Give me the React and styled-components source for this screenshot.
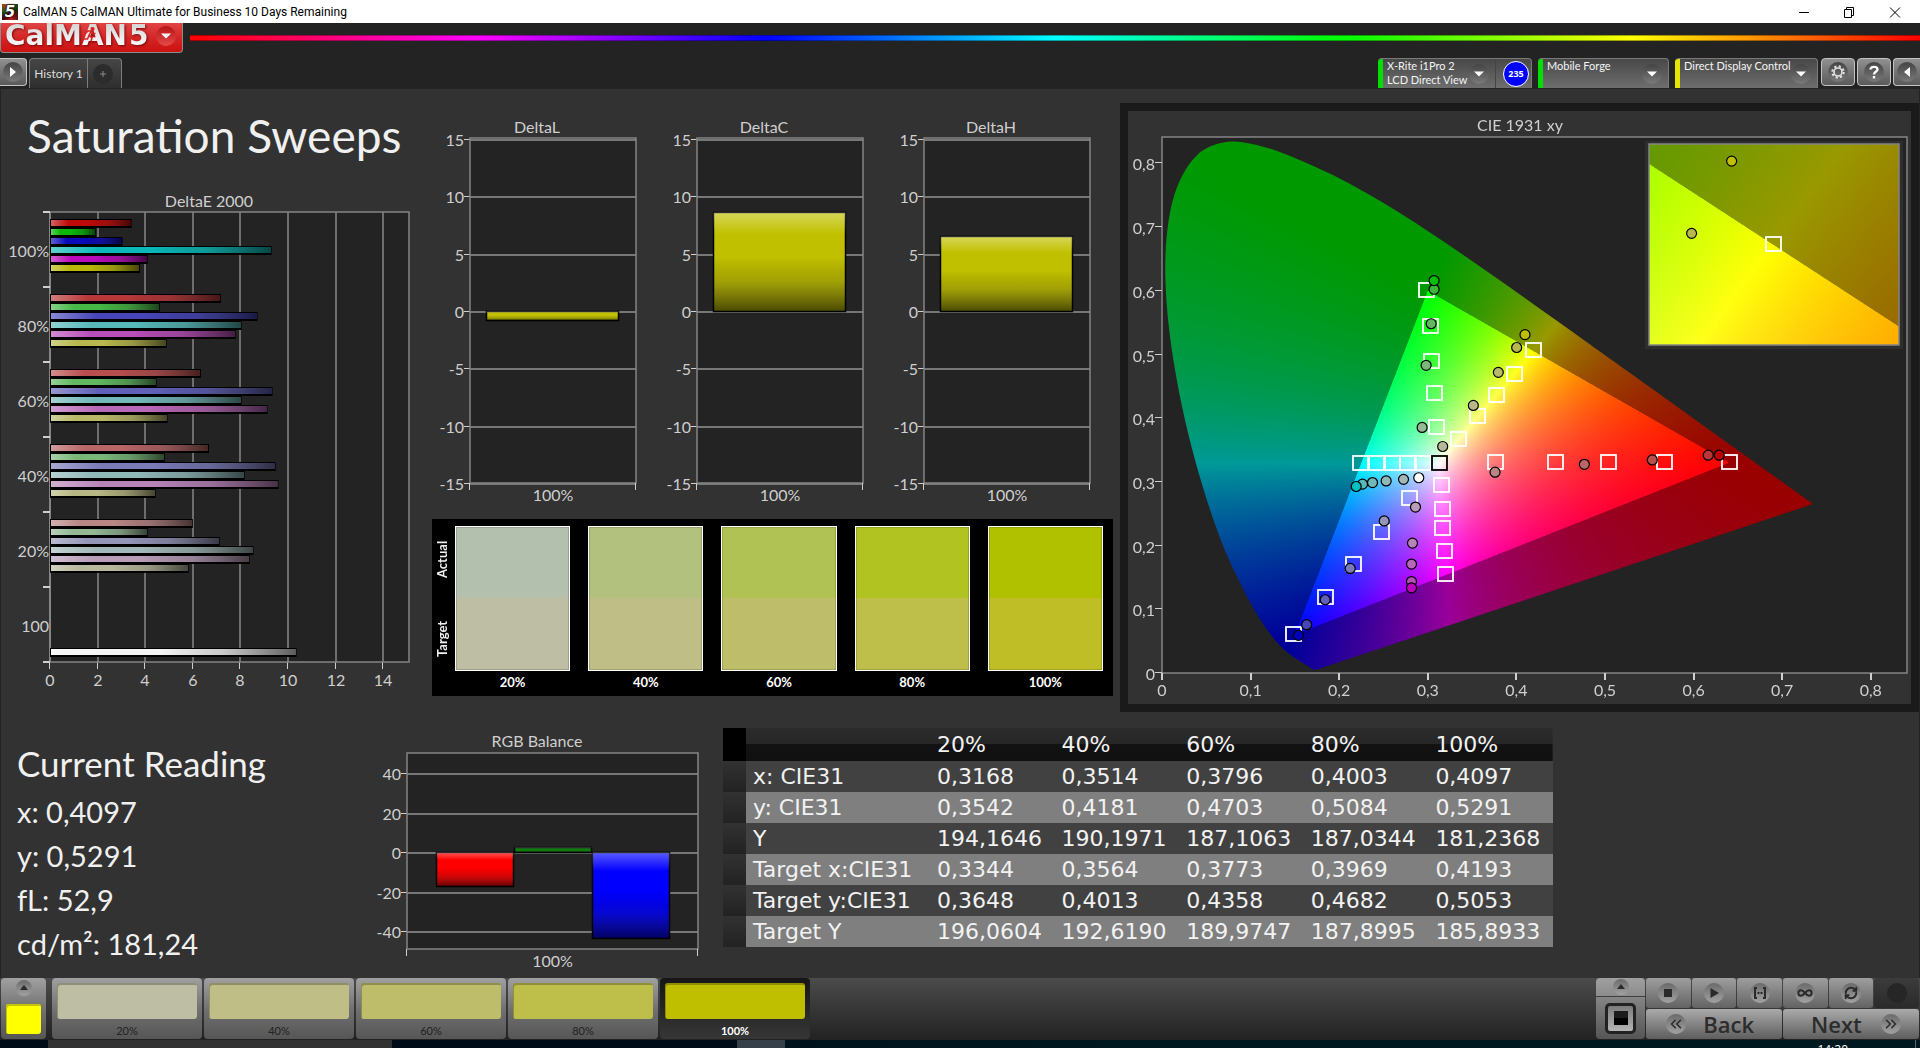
import React, { useEffect, useRef } from "react";
import styled, { createGlobalStyle } from "styled-components";
import { ChevronsLeft, ChevronsRight, Infinity as InfinityIcon, RefreshCw } from "lucide-react";

const UI = `Lato, "Open Sans", sans-serif`;
const SYSTEM = `"Open Sans", "Noto Sans", sans-serif`;
const WIDE = `"DejaVu Sans", "Noto Sans", sans-serif`;

const GlobalStyle = createGlobalStyle`
  * { box-sizing: border-box; }
  body { margin: 0; background: #232323; font-family: ${UI}; color: #f0f0f0; }
  button { font: inherit; color: inherit; border: 0; padding: 0; margin: 0; cursor: pointer; }
  h1, h2, p { margin: 0; font-weight: 400; }
`;

/* ---------- data ---------- */

const deltaE = [
  { label: "100%", bars: [[3.43, "#bf0a0a"], [1.93, "#0ab70a"], [3.05, "#0a0aba"], [9.31, "#0ab8b8"], [4.1, "#ba0aba"], [3.78, "#b9b80a"]] },
  { label: "80%", bars: [[7.18, "#b83838"], [4.62, "#46b846"], [8.72, "#4646b8"], [8.05, "#56b8b8"], [7.8, "#b84eb8"], [4.9, "#b8b84e"]] },
  { label: "60%", bars: [[6.34, "#b84f4f"], [4.48, "#60b860"], [9.35, "#6060b8"], [8.05, "#72b8b8"], [9.14, "#b868b8"], [4.94, "#b8b868"]] },
  { label: "40%", bars: [[6.68, "#b86666"], [4.82, "#7ab87a"], [9.48, "#7a7ab8"], [8.18, "#8fb8b8"], [9.6, "#b884b8"], [4.44, "#b8b884"]] },
  { label: "20%", bars: [[6, "#b98585"], [4.1, "#95b895"], [7.13, "#9595b8"], [8.55, "#a2b8b8"], [8.39, "#b89cb8"], [5.83, "#b8b89c"]] },
  { label: "100", bars: [null, null, null, null, null, null, [10.36, "#f4f4f4"]] },
];

const deltas = [
  { title: "DeltaL", value: -0.8 },
  { title: "DeltaC", value: 8.6 },
  { title: "DeltaH", value: 6.5 },
];

const swatches = [
  { label: "20%", actual: "#b3c0ae", target: "#bebea4" },
  { label: "40%", actual: "#b2c17e", target: "#bfbe86" },
  { label: "60%", actual: "#b1c254", target: "#bebe6a" },
  { label: "80%", actual: "#b1c321", target: "#bebf4b" },
  { label: "100%", actual: "#b0c100", target: "#c0be26" },
];

const patches = [
  { label: "20%", color: "#bebea4" },
  { label: "40%", color: "#bfbe86" },
  { label: "60%", color: "#bebe6a" },
  { label: "80%", color: "#bebf4b" },
  { label: "100%", color: "#bfbf00", active: true },
];

const levels = ["20%", "40%", "60%", "80%", "100%"];
const readings = [
  ["x: CIE31", "0,3168", "0,3514", "0,3796", "0,4003", "0,4097"],
  ["y: CIE31", "0,3542", "0,4181", "0,4703", "0,5084", "0,5291"],
  ["Y", "194,1646", "190,1971", "187,1063", "187,0344", "181,2368"],
  ["Target x:CIE31", "0,3344", "0,3564", "0,3773", "0,3969", "0,4193"],
  ["Target y:CIE31", "0,3648", "0,4013", "0,4358", "0,4682", "0,5053"],
  ["Target Y", "196,0604", "192,6190", "189,9747", "187,8995", "185,8933"],
];

const rgbBalance = [[-17.2, "#ff0000"], [2.6, "#118011"], [-43.5, "#0000ff"]];

const cieTargets = [
  [0.298, 0.602], [0.302, 0.545], [0.304, 0.49], [0.307, 0.439], [0.309, 0.386],
  [0.4193, 0.507], [0.3969, 0.469], [0.3765, 0.437], [0.355, 0.404], [0.334, 0.367],
  [0.2237, 0.33], [0.2417, 0.33], [0.2594, 0.33], [0.2767, 0.33], [0.2944, 0.33],
  [0.3759, 0.332], [0.4436, 0.332], [0.5034, 0.332], [0.5665, 0.332], [0.6395, 0.332],
  [0.3147, 0.295], [0.3162, 0.257], [0.3162, 0.227], [0.318, 0.192], [0.3195, 0.155],
  [0.279, 0.275], [0.2474, 0.222], [0.2158, 0.171], [0.1838, 0.12], [0.1481, 0.0615],
];

const cieActual = [
  [0.2936, 0.3855, "#95b895"], [0.2981, 0.483, "#7ab87a"], [0.3038, 0.5483, "#60b860"], [0.3071, 0.6024, "#3cb83c"], [0.3071, 0.6161, "#00bf00"],
  [0.3168, 0.3556, "#b8b89c"], [0.3514, 0.42, "#b8b884"], [0.3796, 0.472, "#b8b868"], [0.4003, 0.511, "#b8b84e"], [0.4097, 0.5312, "#bfbf00"],
  [0.2726, 0.304, "#a2b8b8"], [0.253, 0.3015, "#8fb8b8"], [0.2376, 0.299, "#72b8b8"], [0.2263, 0.2965, "#56b8b8"], [0.2192, 0.2928, "#00bfbf"],
  [0.3759, 0.3152, "#b98585"], [0.4767, 0.3276, "#b86666"], [0.5534, 0.3345, "#b84f4f"], [0.6165, 0.3419, "#b83838"], [0.6289, 0.3419, "#bf0000"],
  [0.2861, 0.2605, "#b89cb8"], [0.2827, 0.2039, "#b884b8"], [0.2816, 0.171, "#b868b8"], [0.2816, 0.1436, "#b84eb8"], [0.2816, 0.1337, "#bf00bf"],
  [0.2508, 0.2387, "#9595b8"], [0.2124, 0.1641, "#7a7ab8"], [0.1842, 0.115, "#6060b8"], [0.1632, 0.0758, "#4646b8"], [0.1541, 0.0591, "#0000bf"],
  [0.2898, 0.3065, "#ffffff"],
];

const locus = [
  [0.1741, 0.005], [0.1714, 0.0051], [0.1689, 0.0069], [0.1644, 0.0109], [0.1566, 0.0177], [0.151, 0.0227],
  [0.144, 0.0297], [0.1355, 0.0399], [0.1241, 0.0578], [0.1096, 0.0868], [0.0913, 0.1327], [0.0687, 0.2007],
  [0.0454, 0.295], [0.0235, 0.4127], [0.0082, 0.5384], [0.0039, 0.6548], [0.0139, 0.7502], [0.0389, 0.812],
  [0.0743, 0.8338], [0.1142, 0.8262], [0.1547, 0.8059], [0.1929, 0.7816], [0.2296, 0.7543], [0.2658, 0.7243],
  [0.3016, 0.6923], [0.3373, 0.6589], [0.3731, 0.6245], [0.4087, 0.5896], [0.4441, 0.5547], [0.4788, 0.5202],
  [0.5125, 0.4866], [0.5752, 0.4242], [0.627, 0.3725], [0.6658, 0.334], [0.6915, 0.3083], [0.719, 0.2809], [0.7347, 0.2653],
];

/* ---------- window frame ---------- */

const Window = styled.div`
  min-height: 100vh;
  display: flex;
  flex-direction: column;
  overflow: hidden;
`;

const TitleBar = styled.header`
  height: 23px;
  flex: none;
  display: flex;
  align-items: center;
  gap: 5px;
  padding: 0 18px 0 2px;
  background: #fff;
  color: #000;
  font: 12px/22px Roboto, ${SYSTEM};
`;

const AppIcon = styled.span`
  width: 16px;
  height: 16px;
  background: conic-gradient(from 20deg, #2a5a20, #103010, #601010, #c02020, #400808, #206020, #b04010, #2a5a20);
  color: #fff;
  font: italic 700 15px/16px "DejaVu Sans", sans-serif;
  text-align: center;
  text-shadow: 0 0 2px #000, 0 0 2px #000;
`;

const WindowControls = styled.div`
  margin-left: auto;
  display: flex;
  gap: 32px;
`;

const WindowButton = styled.button`
  width: 14px;
  height: 14px;
  background: none;
  svg { display: block; }
`;

const BrandRow = styled.div`
  height: 35px;
  flex: none;
  display: flex;
  gap: 7px;
`;

const Brand = styled.button`
  width: 183px;
  height: 30px;
  flex: none;
  display: flex;
  align-items: center;
  gap: 2px;
  padding: 0 6px 3px 4px;
  border: 1px solid #8d8d8d;
  border-top: 0;
  border-radius: 0 0 4px 4px;
  background: linear-gradient(#e04444, #d42626 50%, #cc1010);
`;

const BrandText = styled.span`
  position: relative;
  font: 700 28px/26px "DejaVu Sans", sans-serif;
  background: linear-gradient(#d4d4d4, #fff);
  background-clip: text;
  color: transparent;
  filter: drop-shadow(1px 1px 1px #7a0808);
`;

const BrandArrow = styled.span`
  margin-left: auto;
  width: 20px;
  height: 20px;
  display: grid;
  place-items: center;
  border-radius: 50%;
  background: linear-gradient(#b81414, #e44a4a);
`;

const Runner = styled.svg`
  position: absolute;
  left: 78px;
  top: 4px;
`;

const Spectrum = styled.div`
  flex: 1;
  height: 6px;
  margin-top: 12px;
  border: solid rgba(0, 0, 0, 0.35);
  border-width: 1px 0;
  background: linear-gradient(90deg, #f00, #f0f, #00f, #0ff, #0f0, #ff0, #f00) border-box;
`;

const ToolRow = styled.div`
  height: 30px;
  flex: none;
  display: flex;
  align-items: flex-start;
`;

const Disc = styled.span`
  width: ${(p) => p.$size || 20}px;
  height: ${(p) => p.$size || 20}px;
  flex: none;
  display: grid;
  place-items: center;
  border-radius: 50%;
  background: ${(p) => p.$bg || "linear-gradient(#444, #7a7a7a)"};
  svg { display: block; }
`;

const ToolButton = styled.button`
  width: ${(p) => p.$width || 34}px;
  height: 28px;
  display: grid;
  place-items: center;
  border: 1px solid #c4c4c4;
  border-left-width: ${(p) => (p.$flush === "left" ? 0 : 1)}px;
  border-right-width: ${(p) => (p.$flush === "right" ? 0 : 1)}px;
  border-radius: ${(p) => (p.$flush === "left" ? "0 4px 4px 0" : p.$flush === "right" ? "4px 0 0 4px" : "4px")};
  background: linear-gradient(#909090, #5a5a5a);
`;

const Tabs = styled.nav`
  height: 30px;
  margin-left: 2px;
  display: flex;
  border: 1px solid #7c7c7c;
  border-bottom: 0;
  border-radius: 4px 4px 0 0;
  background: linear-gradient(#464646, #2e2e2e);
`;

const Tab = styled.button`
  width: 58px;
  background: none;
  color: #dcdcdc;
  font-size: 12px;
  line-height: 28px;
  text-align: center;
  border-right: 1px solid #7c7c7c;
`;

const AddTab = styled.button`
  width: 33px;
  padding-left: 5px;
  background: none;
`;

const Devices = styled.div`
  margin-left: auto;
  display: flex;
  gap: 6px;
`;

const Device = styled.div`
  width: ${(p) => p.$width}px;
  height: 30px;
  display: flex;
  border: 1px solid #7a7a7a;
  border-width: 1px 1px 0 0;
  border-radius: 4px 4px 0 0;
  overflow: hidden;
  background: linear-gradient(#484848, #6e6e6e);
  &::before { content: ""; width: 5px; flex: none; background: ${(p) => p.$accent}; }
`;

const DeviceSelect = styled.button`
  flex: 1;
  min-width: 0;
  display: flex;
  justify-content: space-between;
  padding: 0 6px 0 4px;
  background: none;
  color: #f4f4f4;
  text-align: left;
  font-size: 11px;
  line-height: 14px;
  white-space: nowrap;
  ${Disc} { margin-top: 5px; }
`;

const LevelBadge = styled.button`
  width: 36px;
  flex: none;
  display: grid;
  align-items: center;
  justify-items: end;
  padding-right: 2px;
  border-left: 1px solid #444;
  background: none;
  span {
    width: 26px;
    height: 26px;
    border: 1px solid #fff;
    border-radius: 50%;
    background: #00f;
    color: #fff;
    font: 700 9px/24px "Open Sans", sans-serif;
    text-align: center;
  }
`;

const ToolButtons = styled.div`
  display: flex;
  gap: 2px;
  margin-left: 3px;
`;

/* ---------- workspace ---------- */

const Workspace = styled.main`
  flex: 1;
  margin: 1px 1px 0;
  background: #323232;
`;

const Upper = styled.div`
  display: grid;
  grid-template-columns: minmax(0, 430fr) minmax(0, 689fr) minmax(0, 799fr);
  align-items: start;
  padding-bottom: 16px;
`;

const Heading = styled.h1`
  padding: 17px 0 24px 26px;
  font-size: 46px;
  line-height: 60px;
  white-space: nowrap;
`;

const MiddleColumn = styled.section`
  padding-top: 23px;
`;

const DeltaRow = styled.div`
  display: grid;
  grid-template-columns: repeat(3, minmax(0, 1fr));
  padding-right: 8px;
`;

const Chart = styled.svg`
  display: block;
  width: 100%;
  height: auto;
  font: 16px ${UI};
`;

const SwatchPanel = styled.div`
  display: flex;
  margin: 7px 7px 0 1px;
  padding-right: 10px;
  height: 177px;
  background: #000;
`;

const SideLabels = styled.div`
  width: 23px;
  height: 160px;
  display: flex;
  flex-direction: column;
  span {
    flex: 1;
    writing-mode: vertical-rl;
    transform: rotate(180deg);
    text-align: center;
    font-size: 13px;
    font-weight: 700;
    line-height: 20px;
    align-self: flex-start;
  }
`;

const SwatchGrid = styled.div`
  flex: 1;
  padding-top: 7px;
  display: grid;
  grid-template-columns: repeat(5, minmax(0, 1fr));
  gap: 18px;
`;

const Swatch = styled.div`
  text-align: center;
  font-size: 13px;
  font-weight: 700;
  line-height: 22px;
  color: #fff;
`;

const SwatchColor = styled.div`
  height: 145px;
  border: 1px solid #fff;
  background: linear-gradient(${(p) => p.$actual} 50%, ${(p) => p.$target} 50%);
  box-shadow: inset 0 0 0 1px rgba(0, 0, 0, 0.15);
`;

const CiePanel = styled.section`
  margin-top: 14px;
  border: 8px solid #1a1a1a;
  position: relative;
`;

const CieCanvas = styled.canvas`
  display: block;
  width: 100%;
  height: auto;
`;

const CieOverlay = styled(Chart)`
  position: absolute;
  inset: 0;
`;

const Lower = styled.div`
  display: grid;
  grid-template-columns: minmax(0, 372fr) minmax(0, 350fr) minmax(0, 830fr) minmax(0, 366fr);
  align-items: start;
`;

const Reading = styled.section`
  padding: 11px 0 0 16px;
  white-space: nowrap;
  h2 { font-size: 35px; line-height: 48px; margin-bottom: 3px; }
  p { font-size: 29px; line-height: 44px; }
`;

const ReadingTable = styled.table`
  width: 100%;
  table-layout: fixed;
  border-collapse: collapse;
  font: 22px/30px ${WIDE};
  color: #f2f2f2;
  th, td { height: 31px; padding: 0 0 0 7px; text-align: left; font-weight: 400; white-space: nowrap; }
  thead th { height: 33px; }
`;

const HeadRow = styled.tr`
  background: linear-gradient(#2c2c2c, #262626 48%, #121212 50%, #101010);
  td:first-child { background: #000; }
`;

const BodyRow = styled.tr`
  background: ${(p) => (p.$alt ? "#7f7f7f" : "#414141")};
  td:first-child { background: linear-gradient(#323232, #222); }
`;

const GutterCol = styled.col`width: 23px;`;
const NameCol = styled.col`width: 184px;`;

/* ---------- bottom bar ---------- */

const BottomBar = styled.footer`
  height: 62px;
  flex: none;
  display: flex;
  padding: 0 1px;
  background: linear-gradient(#4b4b4b, #222);
`;

const metal = "linear-gradient(#a0a0a0, #6e6e6e 55%, #565656)";

const PickerButton = styled.button`
  width: 45px;
  height: 61px;
  display: flex;
  flex-direction: column;
  align-items: center;
  padding-top: 2px;
  gap: 8px;
  border-radius: 4px;
  background: ${metal};
`;

const PickerColor = styled.span`
  width: 35px;
  height: 30px;
  border-radius: 3px;
  background: #ff0;
  box-shadow: inset 1px 2px 0 #c4c400;
`;

const PatchList = styled.div`
  display: flex;
  gap: 2px;
  margin-left: 6px;
`;

const Patch = styled.button`
  width: 150px;
  height: 61px;
  display: flex;
  flex-direction: column;
  padding: 5px 5px 0;
  border-radius: 4px;
  background: ${(p) => (p.$active ? "linear-gradient(#161616, #363636)" : metal)};
  color: ${(p) => (p.$active ? "#fff" : "#222")};
  font-size: 11px;
  font-weight: ${(p) => (p.$active ? 700 : 400)};
  line-height: 24px;
  text-align: center;
`;

const PatchColor = styled.span`
  width: 100%;
  height: 36px;
  flex: none;
  border-radius: 3px;
  background: ${(p) => p.$color};
  box-shadow: inset 1px 2px 0 rgba(0, 0, 0, 0.25);
`;

const PatchLabel = styled.span`width: 100%;`;

const Transport = styled.div`
  margin-left: auto;
  display: flex;
  gap: 1px;
`;

const PatternPicker = styled.div`
  width: 49px;
  height: 61px;
  display: grid;
  grid-template-rows: 18px 1fr;
  gap: 1px;
  border-radius: 4px;
  overflow: hidden;
`;

const PatternButton = styled.button`
  display: grid;
  place-items: center;
  background: ${(p) => (p.$top ? "linear-gradient(#a0a0a0, #8c8c8c)" : "linear-gradient(#858585, #555)")};
`;

const PatternFrame = styled.span`
  width: 31px;
  height: 31px;
  display: grid;
  place-items: center;
  border: 3px solid #222;
  border-radius: 5px;
  background: linear-gradient(#7c7c7c, #b4b4b4);
  &::after { content: ""; width: 14px; height: 14px; background: linear-gradient(#1c1c1c 50%, #000 50%); }
`;

const TransportGrid = styled.div`
  width: 273px;
  display: grid;
  grid-template-columns: repeat(6, minmax(0, 1fr));
  grid-template-rows: 30px 30px;
  gap: 1px;
`;

const TransportButton = styled.button`
  display: grid;
  place-items: center;
  border-radius: 3px;
  background: ${(p) => (p.$off ? "linear-gradient(#3c3c3c, #2a2a2a)" : "linear-gradient(#9e9e9e, #636363)")};
`;

const StepButton = styled.button`
  grid-column: span 3;
  display: flex;
  align-items: center;
  justify-content: space-between;
  padding: 0 ${(p) => (p.$next ? 18 : 28)}px 0 ${(p) => (p.$next ? 28 : 20)}px;
  border-radius: 3px;
  background: linear-gradient(#aaa, #5e5e5e);
  color: #2c2c2c;
  font: 600 22px/28px ${SYSTEM};
`;

const TaskBar = styled.div`
  height: 8px;
  flex: none;
  display: flex;
  overflow: hidden;
  background: linear-gradient(90deg, #000e18 20%, #001820 60%);
`;

const TaskSlot = styled.span`
  width: ${(p) => p.$width}px;
  background: ${(p) => p.$color};
`;

const Clock = styled.span`
  margin-left: auto;
  padding: 3px 67px 0 0;
  border-right: 1px solid #5a6a70;
  margin-right: 4px;
  color: #fff;
  font: 12px/14px ${SYSTEM};
`;

/* ---------- icons ---------- */

const DownIcon = () => (
  <svg width="10" height="6" viewBox="0 0 10 6"><path d="M0 0.500h10L5 5.500z" fill="#fff" /></svg>
);
const UpIcon = () => (
  <svg width="8" height="6" viewBox="0 0 8 6"><path d="M0 5h8L4 0z" fill="#2a2a2a" /></svg>
);
const SideIcon = ({ left }) => (
  <svg width="8" height="12" viewBox="0 0 8 12"><path d={left ? "M7 1v10L1 6z" : "M1 1v10l6-5z"} fill="#fff" /></svg>
);
const GearIcon = () => (
  <svg width="16" height="16" viewBox="0 0 16 16" fill="none" stroke="#e4e4e4">
    <circle cx="8" cy="8" r="4" strokeWidth="1.6" />
    <circle cx="8" cy="8" r="5.700" strokeWidth="2" strokeDasharray="2.200 2.276" />
  </svg>
);

/* ---------- charts ---------- */

const LABEL = "#cfcfcf";
const GRID = "#858585";
const PLOT = "#232323";

function Gloss({ id, vertical }) {
  return (
    <linearGradient id={id} x1="0" y1="0" x2={vertical ? 0 : 1} y2={vertical ? 1 : 0}>
      <stop offset="0" stopColor="#fff" stopOpacity="0.35" />
      <stop offset="0.22" stopColor="#fff" stopOpacity="0" />
      <stop offset="0.45" stopColor="#000" stopOpacity="0" />
      <stop offset="0.7" stopColor="#222" stopOpacity="0.2" />
      <stop offset="1" stopColor="#000" stopOpacity="0.62" />
    </linearGradient>
  );
}

function DeltaEChart() {
  const left = 49, right = 408, top = 22, bottom = 472, unit = 23.8, band = 75;
  return (
    <Chart viewBox="0 0 430 510" role="img" aria-label="DeltaE 2000">
      <defs><Gloss id="gloss-h" /></defs>
      <rect x={left} y={top} width={right - left} height={bottom - top} fill={PLOT} />
      {[0, 2, 4, 6, 8, 10, 12, 14].map((v) => {
        const x = Math.round(left + v * unit);
        return (
          <g key={v}>
            <rect x={x - 1} y={top} width="2" height={bottom - top} fill={v ? "#6e6e6e" : GRID} />
            <rect x={x - 1} y={bottom} width="1" height="7" fill={LABEL} />
            <text x={x} y="496" fill={LABEL} textAnchor="middle">{v}</text>
          </g>
        );
      })}
      <rect x={left} y={top} width={right - left} height={bottom - top} fill="none" stroke={GRID} strokeWidth="1.500" />
      {[0, 1, 2, 3, 4, 5, 6].map((i) => (
        <rect key={i} x="42" y={top - 1 + i * band} width="7" height="2" fill={LABEL} />
      ))}
      {deltaE.map((group, g) => (
        <g key={g}>
          <text x="48" y={top + g * band + 45} fill={LABEL} textAnchor="end">{group.label}</text>
          {group.bars.map((bar, i) => {
            if (!bar) return null;
            const y = top + g * band + 7 + i * 9;
            const width = bar[0] * unit;
            return (
              <g key={i}>
                <rect x={left} y={y} width={width} height="9" fill="#000" />
                <rect x={left + 1} y={y + 1} width={width - 2} height="6" fill={bar[1]} />
                <rect x={left + 1} y={y + 1} width={width - 2} height="6" fill="url(#gloss-h)" />
              </g>
            );
          })}
        </g>
      ))}
      <text x="208" y="17" fill={LABEL} textAnchor="middle">DeltaE 2000</text>
    </Chart>
  );
}

function ColumnChart({ title, width, height, plot, titleX, titleY, ticks, zero, unit, bars, barLeft, barWidth, labelY }) {
  const id = "gloss-" + title.replace(" ", "");
  return (
    <Chart viewBox={`0 0 ${width} ${height}`} role="img" aria-label={title}>
      <defs><Gloss id={id} vertical /></defs>
      <text x={titleX} y={titleY} fill={LABEL} textAnchor="middle">{title}</text>
      <rect x={plot.left} y={plot.top} width={plot.right - plot.left} height={plot.bottom - plot.top} fill={PLOT} />
      {ticks.map((v) => {
        const y = Math.round(zero - v * unit);
        return (
          <g key={v}>
            <rect x={plot.left} y={y - 1} width={plot.right - plot.left} height="2" fill="#777" />
            <rect x={plot.left - 6} y={y - 1} width="6" height="1" fill={LABEL} />
            <text x={plot.left - 6} y={y + 6} fill={LABEL} textAnchor="end">{v}</text>
          </g>
        );
      })}
      <rect x={plot.left} y={plot.top} width={plot.right - plot.left} height={plot.bottom - plot.top} fill="none" stroke={GRID} strokeWidth="1.500" />
      <rect x={plot.left - 1} y={plot.bottom} width="1" height="7" fill={LABEL} />
      <rect x={plot.right - 1} y={plot.bottom} width="1" height="7" fill={LABEL} />
      {bars.map(([value, color], i) => {
        const h = Math.max(1, Math.round(Math.abs(value) * unit));
        const y = value > 0 ? zero - h : zero;
        const box = { x: barLeft + i * barWidth + 0.5, y: y - 0.5, width: barWidth - 1, height: h };
        return (
          <g key={i}>
            <rect {...box} fill={color} stroke="#000" strokeWidth="1.500" />
            <rect {...box} fill={`url(#${id})`} />
          </g>
        );
      })}
      <text x={(plot.left + plot.right) / 2} y={labelY} fill={LABEL} textAnchor="middle">100%</text>
    </Chart>
  );
}

const CIE = { width: 783, height: 593, left: 34, top: 26, right: 779, bottom: 562, sx: 886, sy: 637 };
const INSET = { left: 521, top: 33, width: 250, height: 201, x: 0.3903, y: 0.534, sx: 4260, sy: 3490 };
const cieX = (x) => CIE.left + x * CIE.sx;
const cieY = (y) => CIE.bottom - y * CIE.sy;

function insideGamut(x, y) {
  const t = [[0.64, 0.33], [0.3, 0.6], [0.15, 0.06]];
  return t.every(([ax, ay], i) => {
    const [bx, by] = t[(i + 1) % 3];
    return (bx - ax) * (y - ay) - (by - ay) * (x - ax) >= 0;
  });
}

function chromaColor(x, y) {
  const X = x / y, Z = (1 - x - y) / y;
  const rgb = [
    3.2406 * X - 1.5372 - 0.4986 * Z,
    -0.9689 * X + 1.8758 + 0.0415 * Z,
    0.0557 * X - 0.204 + 1.057 * Z,
  ].map((c) => Math.max(0, c));
  const max = Math.max(...rgb);
  const level = insideGamut(x, y) ? 255 : 153;
  return rgb.map((c) => (c / max) * level);
}

function paintField(width, height, toX, toY) {
  const layer = document.createElement("canvas");
  layer.width = width;
  layer.height = height;
  const ctx = layer.getContext("2d");
  const image = ctx.createImageData(width, height);
  for (let py = 0; py < height; py++) {
    for (let px = 0; px < width; px++) {
      const sum = [0, 0, 0];
      for (const [ox, oy] of [[0.25, 0.25], [0.75, 0.25], [0.25, 0.75], [0.75, 0.75]]) {
        const c = chromaColor(toX(px + ox), Math.max(0.0005, toY(py + oy)));
        for (let k = 0; k < 3; k++) sum[k] += c[k] / 4;
      }
      image.data.set([sum[0], sum[1], sum[2], 255], (py * width + px) * 4);
    }
  }
  ctx.putImageData(image, 0, 0);
  return layer;
}

function drawCie(canvas) {
  const ctx = canvas.getContext("2d");
  ctx.clearRect(0, 0, CIE.width, CIE.height);

  const field = paintField(CIE.width, CIE.height, (px) => (px - CIE.left) / CIE.sx, (py) => (CIE.bottom - py) / CIE.sy);
  const mask = field.getContext("2d");
  const p = locus.map(([x, y]) => [cieX(x), cieY(y)]);
  mask.globalCompositeOperation = "destination-in";
  mask.beginPath();
  mask.moveTo(...p[0]);
  for (let i = 0; i < p.length - 1; i++) {
    const a = p[Math.max(0, i - 1)], b = p[i], c = p[i + 1], d = p[Math.min(p.length - 1, i + 2)];
    mask.bezierCurveTo(b[0] + (c[0] - a[0]) / 6, b[1] + (c[1] - a[1]) / 6, c[0] - (d[0] - b[0]) / 6, c[1] - (d[1] - b[1]) / 6, c[0], c[1]);
  }
  mask.closePath();
  mask.fill();

  ctx.fillStyle = PLOT;
  ctx.fillRect(CIE.left, CIE.top, CIE.right - CIE.left, CIE.bottom - CIE.top);
  ctx.drawImage(field, 0, 0);

  ctx.fillStyle = "#2e2e2e";
  ctx.fillRect(INSET.left - 4, INSET.top - 3, INSET.width + 8, INSET.height + 7);
  const inset = paintField(INSET.width, INSET.height, (px) => INSET.x + px / INSET.sx, (py) => INSET.y - py / INSET.sy);
  ctx.drawImage(inset, INSET.left, INSET.top);
}

function Marker({ x, y, color = "#fff" }) {
  return <rect x={Math.round(x) - 7} y={Math.round(y) - 7} width="15" height="14" fill="none" stroke={color} strokeWidth="1.800" />;
}

function CieChart() {
  const ref = useRef(null);
  useEffect(() => drawCie(ref.current), []);
  const ticks = [0, 1, 2, 3, 4, 5, 6, 7, 8];
  const text = (v) => (v ? `0,${v}` : "0");
  const insetX = (x) => INSET.left + (x - INSET.x) * INSET.sx;
  const insetY = (y) => INSET.top + (INSET.y - y) * INSET.sy;
  return (
    <CiePanel>
      <CieCanvas ref={ref} width={CIE.width} height={CIE.height} />
      <CieOverlay viewBox={`0 0 ${CIE.width} ${CIE.height}`} role="img" aria-label="CIE 1931 xy">
        <text x="392" y="20" fill={LABEL} textAnchor="middle">CIE 1931 xy</text>
        <rect x={CIE.left} y={CIE.top} width={CIE.right - CIE.left} height={CIE.bottom - CIE.top} fill="none" stroke={GRID} strokeWidth="1.500" />
        {ticks.map((v) => (
          <g key={v}>
            <rect x={Math.round(cieX(v / 10)) - 1} y={CIE.bottom} width="2" height="7" fill={LABEL} />
            <text x={cieX(v / 10)} y="585" fill={LABEL} textAnchor="middle">{text(v)}</text>
            <rect x={CIE.left - 7} y={Math.round(cieY(v / 10)) - 1} width="7" height="1" fill={LABEL} />
            <text x={CIE.left - 7} y={cieY(v / 10) + 7} fill={LABEL} textAnchor="end">{text(v)}</text>
          </g>
        ))}
        {cieTargets.map(([x, y], i) => <Marker key={i} x={cieX(x)} y={cieY(y)} />)}
        <Marker x={cieX(0.3127)} y={cieY(0.33)} color="#000" />
        {cieActual.map(([x, y, color], i) => (
          <circle key={i} cx={cieX(x)} cy={cieY(y)} r="5" fill={color} stroke="#000" strokeWidth="1.200" />
        ))}
        <rect x={INSET.left} y={INSET.top} width={INSET.width} height={INSET.height} fill="none" stroke={GRID} strokeWidth="1.500" />
        <Marker x={insetX(0.4193)} y={insetY(0.5053)} />
        <circle cx={insetX(0.4003)} cy={insetY(0.5084)} r="5" fill="#b8b84e" stroke="#000" strokeWidth="1.200" />
        <circle cx={insetX(0.4097)} cy={insetY(0.5291)} r="5" fill="#bfbf00" stroke="#000" strokeWidth="1.200" />
      </CieOverlay>
    </CiePanel>
  );
}

/* ---------- page ---------- */

const grey = "linear-gradient(#6a6a6a, #a2a2a2)";

export default function App() {
  return (
    <Window>
      <GlobalStyle />
      <TitleBar>
        <AppIcon aria-hidden="true">5</AppIcon>
        <span>CalMAN 5 CalMAN Ultimate for Business 10 Days Remaining</span>
        <WindowControls>
          <WindowButton aria-label="Minimize">
            <svg width="14" height="14" viewBox="0 0 14 14"><path d="M3 7.500h10" stroke="#000" /></svg>
          </WindowButton>
          <WindowButton aria-label="Restore">
            <svg width="14" height="14" viewBox="0 0 14 14" fill="none" stroke="#000"><path d="M2.500 4.500h7v8h-7zM4.500 4.500v-2h7v8h-2" /></svg>
          </WindowButton>
          <WindowButton aria-label="Close">
            <svg width="14" height="14" viewBox="0 0 14 14" stroke="#000"><path d="M2 2.500l10 10M12 2.500l-10 10" /></svg>
          </WindowButton>
        </WindowControls>
      </TitleBar>

      <BrandRow>
        <Brand>
          <BrandText>
            CalMAN
            <Runner width="14" height="16" viewBox="0 0 14 16" fill="none" stroke="#d22" strokeWidth="1.600" aria-hidden="true">
              <circle cx="9.500" cy="2" r="1.300" fill="#d22" />
              <path d="M8 4.500l-2 4 3 2-1 4M6 8.500l-1.500 3.500H1M3 6l2-2h3l2 2.500h2.500" />
            </Runner>
          </BrandText>
          <BrandText>5</BrandText>
          <BrandArrow><DownIcon /></BrandArrow>
        </Brand>
        <Spectrum />
      </BrandRow>

      <ToolRow>
        <ToolButton $flush="left" $width={27} aria-label="Expand"><Disc><SideIcon /></Disc></ToolButton>
        <Tabs>
          <Tab>History 1</Tab>
          <AddTab aria-label="Add history">
            <Disc $bg="#2c2c2c">
              <svg width="8" height="8" viewBox="0 0 8 8"><path d="M4 1v6M1 4h6" stroke="#8a8a8a" /></svg>
            </Disc>
          </AddTab>
        </Tabs>
        <Devices>
          <Device $width={154} $accent="#00e000">
            <DeviceSelect><span>X-Rite i1Pro 2<br />LCD Direct View</span><Disc><DownIcon /></Disc></DeviceSelect>
            <LevelBadge><span>235</span></LevelBadge>
          </Device>
          <Device $width={131} $accent="#00e000">
            <DeviceSelect><span>Mobile Forge</span><Disc><DownIcon /></Disc></DeviceSelect>
          </Device>
          <Device $width={143} $accent="#e6e600">
            <DeviceSelect><span>Direct Display Control</span><Disc><DownIcon /></Disc></DeviceSelect>
          </Device>
        </Devices>
        <ToolButtons>
          <ToolButton aria-label="Settings"><Disc><GearIcon /></Disc></ToolButton>
          <ToolButton aria-label="Help">
            <Disc>
              <svg width="12" height="14" viewBox="0 0 12 14" fill="none" stroke="#fff" strokeWidth="2.400"><path d="M2.500 4.500C2.500 1 9.500 1 9.500 4.500C9.500 6.500 6 6.500 6 9.500M6 11v2.500" /></svg>
            </Disc>
          </ToolButton>
          <ToolButton $flush="right" $width={27} aria-label="Collapse"><Disc><SideIcon left /></Disc></ToolButton>
        </ToolButtons>
      </ToolRow>

      <Workspace>
        <Upper>
          <section>
            <Heading>Saturation Sweeps</Heading>
            <DeltaEChart />
          </section>
          <MiddleColumn>
            <DeltaRow>
              {deltas.map((d) => (
                <ColumnChart
                  key={d.title}
                  title={d.title}
                  width={227}
                  height={400}
                  plot={{ left: 39, right: 205, top: 26, bottom: 371 }}
                  titleX={106}
                  titleY={21}
                  ticks={[15, 10, 5, 0, -5, -10, -15]}
                  zero={200}
                  unit={11.47}
                  bars={[[d.value, "#c1c000"]]}
                  barLeft={55}
                  barWidth={133}
                  labelY={389}
                />
              ))}
            </DeltaRow>
            <SwatchPanel>
              <SideLabels><span>Actual</span><span>Target</span></SideLabels>
              <SwatchGrid>
                {swatches.map((s) => (
                  <Swatch key={s.label}>
                    <SwatchColor $actual={s.actual} $target={s.target} />
                    {s.label}
                  </Swatch>
                ))}
              </SwatchGrid>
            </SwatchPanel>
          </MiddleColumn>
          <CieChart />
        </Upper>

        <Lower>
          <Reading>
            <h2>Current Reading</h2>
            <p>x: 0,4097</p>
            <p>y: 0,5291</p>
            <p>fL: 52,9</p>
            <p>cd/m²: 181,24</p>
          </Reading>
          <ColumnChart
            title="RGB Balance"
            width={350}
            height={250}
            plot={{ left: 34, right: 325, top: 25, bottom: 221 }}
            titleX={164}
            titleY={19}
            ticks={[40, 20, 0, -20, -40]}
            zero={125}
            unit={1.975}
            bars={rgbBalance}
            barLeft={63}
            barWidth={78}
            labelY={239}
          />
          <ReadingTable>
            <colgroup><GutterCol /><NameCol /><col span="5" /></colgroup>
            <thead>
              <HeadRow>
                <td />
                <td />
                {levels.map((l) => <th key={l} scope="col">{l}</th>)}
              </HeadRow>
            </thead>
            <tbody>
              {readings.map(([name, ...values], i) => (
                <BodyRow key={name} $alt={i % 2 === 1}>
                  <td />
                  <th scope="row">{name}</th>
                  {values.map((v, k) => <td key={k}>{v}</td>)}
                </BodyRow>
              ))}
            </tbody>
          </ReadingTable>
        </Lower>
      </Workspace>

      <BottomBar>
        <PickerButton aria-label="Pattern colour">
          <Disc $size={16} $bg={grey}><UpIcon /></Disc>
          <PickerColor />
        </PickerButton>
        <PatchList>
          {patches.map((p) => (
            <Patch key={p.label} $active={p.active}>
              <PatchColor $color={p.color} />
              <PatchLabel>{p.label}</PatchLabel>
            </Patch>
          ))}
        </PatchList>
        <Transport>
          <PatternPicker>
            <PatternButton $top aria-label="More patterns"><Disc $size={16} $bg={grey}><UpIcon /></Disc></PatternButton>
            <PatternButton aria-label="Window pattern"><PatternFrame /></PatternButton>
          </PatternPicker>
          <TransportGrid>
            <TransportButton aria-label="Stop">
              <Disc $bg={grey}><svg width="8" height="8"><rect width="8" height="8" fill="#2a2a2a" /></svg></Disc>
            </TransportButton>
            <TransportButton aria-label="Play">
              <Disc $bg={grey}><svg width="10" height="10" viewBox="0 0 10 10"><path d="M1.500 0v10L10 5z" fill="#2a2a2a" /></svg></Disc>
            </TransportButton>
            <TransportButton aria-label="Read series">
              <Disc $bg={grey}>
                <svg width="14" height="12" viewBox="0 0 14 12" fill="none" stroke="#2a2a2a" strokeWidth="2">
                  <path d="M4 1H2v10h2M10 1h2v10h-2" /><path d="M4.500 6h2M7.500 6h2" />
                </svg>
              </Disc>
            </TransportButton>
            <TransportButton aria-label="Read continuously">
              <Disc $bg={grey}><InfinityIcon size={16} color="#2a2a2a" strokeWidth={3} /></Disc>
            </TransportButton>
            <TransportButton aria-label="Refresh">
              <Disc $bg={grey}><RefreshCw size={14} color="#2a2a2a" strokeWidth={3.4} /></Disc>
            </TransportButton>
            <TransportButton $off aria-label="Unavailable"><Disc $bg="#262626" /></TransportButton>
            <StepButton>
              <Disc $bg={grey}><ChevronsLeft size={18} color="#2a2a2a" /></Disc>
              Back
            </StepButton>
            <StepButton $next>
              Next
              <Disc $bg={grey}><ChevronsRight size={18} color="#2a2a2a" /></Disc>
            </StepButton>
          </TransportGrid>
        </Transport>
      </BottomBar>

      <TaskBar>
        <TaskSlot $width={48} $color="#000c18" />
        <TaskSlot $width={344} $color="#323232" />
        <TaskSlot $width={345} $color="#000c18" />
        <TaskSlot $width={48} $color="#354049" />
        <Clock>14:20</Clock>
      </TaskBar>
    </Window>
  );
}
